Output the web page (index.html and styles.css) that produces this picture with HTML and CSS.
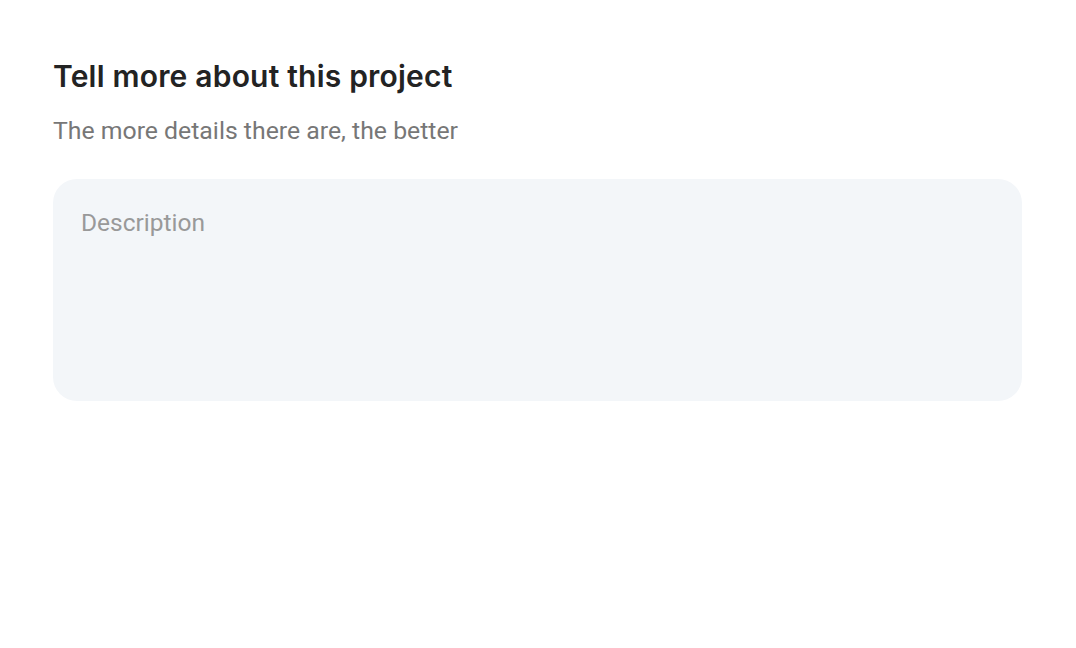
FILE: index.html
```html
<!DOCTYPE html>
<html lang="en">
<head>
<meta charset="utf-8">
<link rel="stylesheet" href="styles.css">
</head>
<body>
<main class="page">
  <h1 class="title">Tell more about this project</h1>
  <p class="subtitle">The more details there are, the better</p>
  <textarea class="description" placeholder="Description"></textarea>
</main>
</body>
</html>
```
FILE: styles.css
```css
html, body {
  margin: 0;
  padding: 0;
  background: #ffffff;
}
.page {
  padding: 58px 54px 0 53px;
  display: flex;
  flex-direction: column;
}
.title {
  margin: 0;
  font-family: Inter, "Liberation Sans", sans-serif;
  font-weight: 600;
  font-size: 30px;
  line-height: 36px;
  color: #232323;
  letter-spacing: 0.2px;
}
.subtitle {
  margin: 22px 0 0;
  font-family: Roboto, "Liberation Sans", sans-serif;
  font-size: 24.8px;
  line-height: 30px;
  color: #777777;
}
.description {
  margin-top: 33px;
  box-sizing: border-box;
  width: 969px;
  height: 222px;
  border: none;
  outline: none;
  resize: none;
  border-radius: 24px;
  background: #f3f6f9;
  padding: 28px 28px;
  font-family: Roboto, "Liberation Sans", sans-serif;
  font-size: 24.5px;
  line-height: 32px;
  color: #333333;
}
.description::placeholder {
  color: #999999;
}
```
